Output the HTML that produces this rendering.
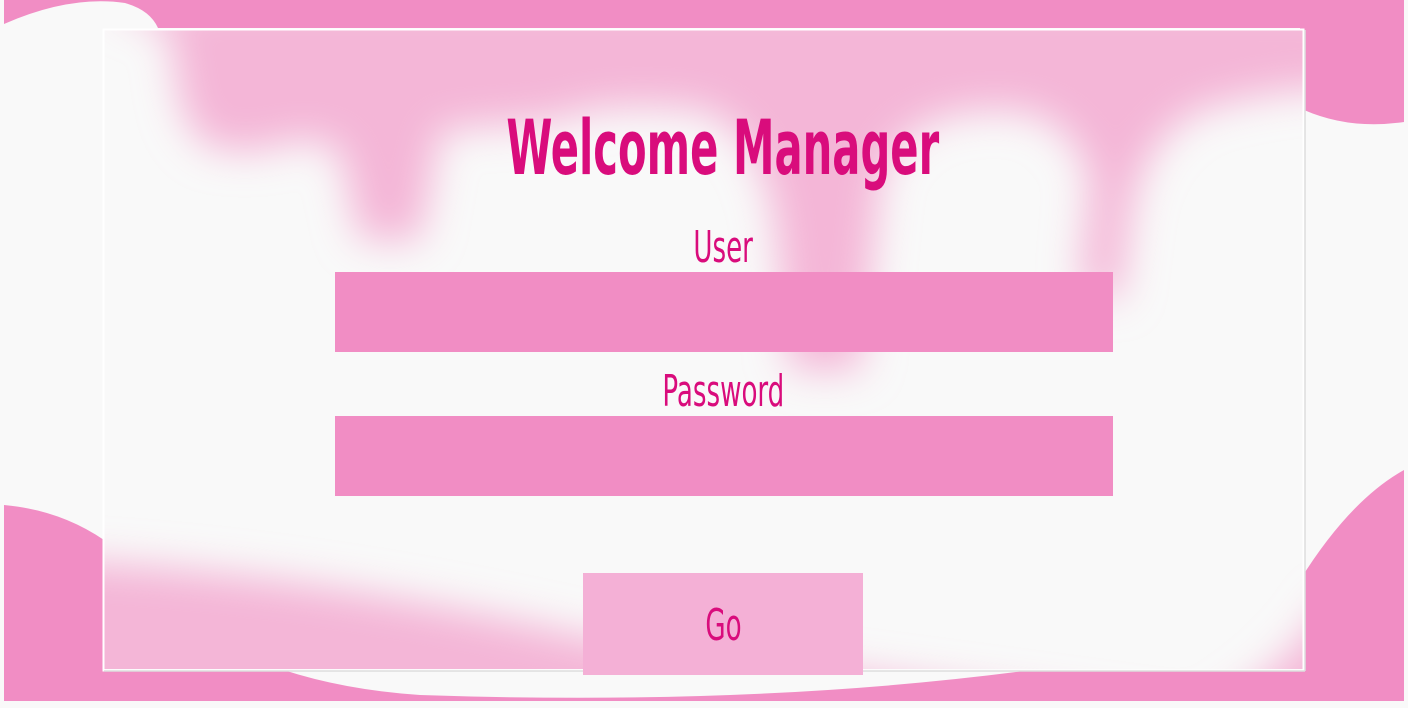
<!DOCTYPE html>
<html style="overflow:hidden"><head><meta charset="utf-8"><style>
*{margin:0;padding:0;box-sizing:border-box}
html,body{width:1408px;height:708px;overflow:hidden}
body{background:#f9f9f9;position:relative;font-family:"DejaVu Sans Condensed","Liberation Sans",sans-serif}
.t{position:absolute;left:19px;width:1408px;text-align:center;color:#d90c7c;line-height:1;white-space:nowrap}
.t span{display:inline-block;transform-origin:center}
.box{position:absolute;background:#f18dc4}
</style></head><body>
<svg width="1408" height="708" style="position:absolute;left:0;top:0">
<defs>
<filter id="b" x="-20%" y="-20%" width="140%" height="140%"><feGaussianBlur stdDeviation="20"/></filter>
<clipPath id="c"><rect x="104" y="30" width="1199" height="639"/></clipPath>
</defs>
<rect x="4" y="0" width="1400" height="701" fill="#f18dc4"/>
<path d="M4 24 Q70 -5 125 3 Q150 10 158 28 L1300 28 L1304 110 Q1350 130 1404 122 L1404 470 Q1350 500 1300 580 L1100 660 Q800 708 420 695 Q200 680 104 540 Q60 510 4 505 Z" fill="#f9f9f9"/>
<rect x="103" y="29" width="1201" height="641" fill="#f9f9f9"/>
<g clip-path="url(#c)"><g filter="url(#b)" fill="#f4b6d7">
<path d="M100 0 L1400 0 L1400 90 Q1300 80 1200 110 Q1140 140 1130 220 L1120 300 L1080 290 L1090 180 Q1070 110 1000 110 Q900 110 880 180 L860 370 L790 370 L775 220 Q760 130 700 110 Q600 100 560 120 L440 130 L420 240 L360 240 L340 150 Q300 130 270 150 L220 150 Q190 140 180 100 L170 30 Z"/>
<path d="M40 560 Q300 570 600 640 L1200 720 Q1290 670 1330 600 L1420 600 L1420 760 L40 760 Z"/>
</g></g>
<rect x="103.5" y="29.5" width="1200" height="641" fill="none" stroke="#ffffff" stroke-width="2"/>
<line x1="1305" y1="30" x2="1305" y2="671" stroke="#ddd" stroke-width="1.5"/>
<line x1="104" y1="671" x2="1305" y2="671" stroke="#ddd" stroke-width="1.5"/>
</svg>
<div class="t" style="top:110px;font-size:76px;font-weight:bold"><span style="transform:scaleX(0.61)">Welcome Manager</span></div>
<div class="t" style="top:226px;font-size:44px"><span style="transform:scaleX(0.66)">User</span></div>
<div class="box" style="left:335px;top:272px;width:778px;height:80px"></div>
<div class="t" style="top:370px;font-size:44px"><span style="transform:scaleX(0.66)">Password</span></div>
<div class="box" style="left:335px;top:416px;width:778px;height:80px"></div>
<div class="box" style="left:583px;top:573px;width:280px;height:102px;background:#f4b0d6"></div>
<div class="t" style="top:604px;font-size:44px"><span style="transform:scaleX(0.66)">Go</span></div>
</body></html>
